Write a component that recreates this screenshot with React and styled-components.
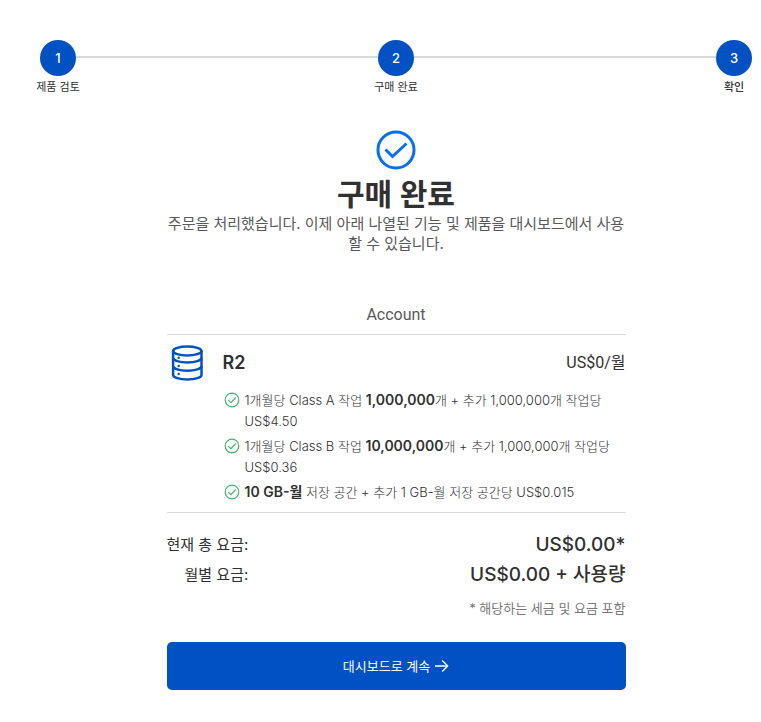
import React from "react";
import styled, { createGlobalStyle } from "styled-components";

const GlobalStyle = createGlobalStyle`
  *, *::before, *::after { box-sizing: border-box; }
  body {
    margin: 0;
    background: #fff;
    color: #313131;
    font-family: Inter, "Noto Sans CJK KR", sans-serif;
    font-size: 15px;
    line-height: 20px;
  }
`;

const Page = styled.div`
  padding: 40px 9px 32px 40px;
`;

const Steps = styled.ol`
  display: flex;
  align-items: flex-start;
  list-style: none;
  margin: 0;
  padding: 0;
`;

const Step = styled.li`
  display: flex;
  flex-direction: column;
  align-items: center;
  flex: 0 0 36px;
  width: 36px;
`;

const StepNumber = styled.span`
  display: grid;
  place-items: center;
  width: 36px;
  height: 36px;
  border-radius: 50%;
  background: #0051c3;
  color: #fff;
  font-size: 13px;
  font-weight: 500;
`;

const StepLabel = styled.span`
  margin-top: 2px;
  white-space: nowrap;
  font-size: 11px;
  line-height: 18px;
  font-weight: ${(p) => (p.$current ? 500 : 400)};
`;

const StepLine = styled.li`
  flex: 1;
  height: 2px;
  margin-top: 16px;
  background: #d9d9d9;
`;

const Content = styled.main`
  width: 100%;
  max-width: 459px;
  margin: 34px auto 0;
`;

const Hero = styled.header`
  display: flex;
  flex-direction: column;
  align-items: center;
  text-align: center;
`;

const Title = styled.h1`
  margin: 4px 0 0;
  font-size: 30px;
  line-height: 40px;
  font-weight: 600;
`;

const Message = styled.p`
  margin: 0;
  color: #595959;
`;

const AccountName = styled.h2`
  margin: 51px 0 0;
  padding-bottom: 9px;
  border-bottom: 1px solid #d9d9d9;
  color: #595959;
  font-family: Roboto, "Noto Sans CJK KR", sans-serif;
  font-size: 16px;
  font-weight: 400;
  text-align: center;
`;

const Product = styled.section`
  display: grid;
  grid-template-columns: 40px 1fr;
  column-gap: 16px;
  padding: 8px 0 9px;
  border-bottom: 1px solid #d9d9d9;
`;

const ProductHeader = styled.div`
  display: flex;
  align-items: center;
  justify-content: space-between;
  height: 40px;
`;

const ProductName = styled.h3`
  margin: 0;
  font-size: 18px;
  font-weight: 600;
`;

const ProductPrice = styled.span`
  font-family: Roboto, "Noto Sans CJK KR", sans-serif;
  font-size: 16px;
`;

const Features = styled.ul`
  grid-column: 2;
  display: grid;
  row-gap: 4px;
  list-style: none;
  margin: 7px 0 0;
  padding: 0;
  font-size: 13px;
  line-height: 21px;
  font-weight: 300;
`;

const Feature = styled.li`
  display: grid;
  grid-template-columns: 16px 1fr;
  column-gap: 5px;
  padding-left: 1px;

  svg { margin-top: 2px; }
`;

const Allowance = styled.strong`
  font-size: 14px;
  line-height: 1;
  font-weight: 600;
`;

const Totals = styled.dl`
  display: grid;
  grid-template-columns: auto 1fr;
  margin: 17px 0 0;
  line-height: 30px;
  text-align: right;
`;

const TotalLabel = styled.dt``;

const TotalValue = styled.dd`
  margin: 0;
  font-size: 19px;
  font-weight: 500;
`;

const Note = styled.p`
  margin: 8px 0 0;
  color: #797979;
  font-size: 13px;
  text-align: right;
`;

const ContinueButton = styled.button`
  display: flex;
  align-items: center;
  justify-content: center;
  gap: 4px;
  width: 100%;
  height: 48px;
  margin-top: 24px;
  border: 0;
  border-radius: 5px;
  background: #0051c3;
  color: #fff;
  font: inherit;
  font-size: 13px;
  cursor: pointer;
`;

const SuccessIcon = () => (
  <svg width="40" height="40" viewBox="0 0 40 40" fill="none" stroke="#056dff" strokeWidth="3" aria-hidden="true">
    <circle cx="20" cy="20" r="18" />
    <path d="M9.5 19.5 L16.5 26.5 L30.5 13.5" />
  </svg>
);

const FeatureIcon = () => (
  <svg width="16" height="16" viewBox="0 0 16 16" fill="none" stroke="#46b46c" aria-hidden="true">
    <circle cx="8" cy="8" r="6.8" strokeWidth="1.2" />
    <path d="M4.2 8.1 L6.9 10.7 L11.8 5.5" strokeWidth="1.1" />
  </svg>
);

const DatabaseIcon = () => (
  <svg width="40" height="40" viewBox="0 0 40 40" fill="none" stroke="#0051c3" strokeWidth="2.5" aria-hidden="true">
    <ellipse cx="20.3" cy="8" rx="14.2" ry="4.4" />
    <path d="M6.1 8 V31.9 C6.1 34.6 12.4 36.4 20.3 36.4 S34.5 34.6 34.5 31.9 V8" />
    <path d="M6.1 14.8 C6.1 17.5 12.4 19.5 20.3 19.5 S34.5 17.5 34.5 14.8" />
    <path d="M6.1 23 C6.1 25.7 12.4 27.7 20.3 27.7 S34.5 25.7 34.5 23" />
    <g fill="#0051c3" stroke="none">
      <circle cx="11.7" cy="14.8" r="1.2" />
      <circle cx="11.7" cy="23" r="1.2" />
      <circle cx="11.7" cy="31" r="1.2" />
    </g>
  </svg>
);

const ArrowIcon = () => (
  <svg width="15" height="14" viewBox="0 0 15 14" fill="none" stroke="currentColor" strokeWidth="1.3" aria-hidden="true">
    <path d="M1 7 H13.5 M8.2 1.5 L13.7 7 L8.2 12.5" />
  </svg>
);

const steps = ["제품 검토", "구매 완료", "확인"];

export default function App() {
  return (
    <>
      <GlobalStyle />
      <Page>
        <Steps>
          {steps.map((label, i) => (
            <React.Fragment key={label}>
              {i > 0 && <StepLine aria-hidden="true" />}
              <Step>
                <StepNumber>{i + 1}</StepNumber>
                <StepLabel $current={i === steps.length - 1}>{label}</StepLabel>
              </Step>
            </React.Fragment>
          ))}
        </Steps>
        <Content>
          <Hero>
            <SuccessIcon />
            <Title>구매 완료</Title>
            <Message>주문을 처리했습니다. 이제 아래 나열된 기능 및 제품을 대시보드에서 사용할 수 있습니다.</Message>
          </Hero>
          <AccountName>Account</AccountName>
          <Product>
            <DatabaseIcon />
            <ProductHeader>
              <ProductName>R2</ProductName>
              <ProductPrice>US$0/월</ProductPrice>
            </ProductHeader>
            <Features>
              <Feature>
                <FeatureIcon />
                <span>1개월당 Class A 작업 <Allowance>1,000,000</Allowance>개 + 추가 1,000,000개 작업당 US$4.50</span>
              </Feature>
              <Feature>
                <FeatureIcon />
                <span>1개월당 Class B 작업 <Allowance>10,000,000</Allowance>개 + 추가 1,000,000개 작업당 US$0.36</span>
              </Feature>
              <Feature>
                <FeatureIcon />
                <span><Allowance>10 GB-월</Allowance> 저장 공간 + 추가 1 GB-월 저장 공간당 US$0.015</span>
              </Feature>
            </Features>
          </Product>
          <Totals>
            <TotalLabel>현재 총 요금:</TotalLabel>
            <TotalValue>US$0.00*</TotalValue>
            <TotalLabel>월별 요금:</TotalLabel>
            <TotalValue>US$0.00 + 사용량</TotalValue>
          </Totals>
          <Note>* 해당하는 세금 및 요금 포함</Note>
          <ContinueButton type="button">
            대시보드로 계속
            <ArrowIcon />
          </ContinueButton>
        </Content>
      </Page>
    </>
  );
}
